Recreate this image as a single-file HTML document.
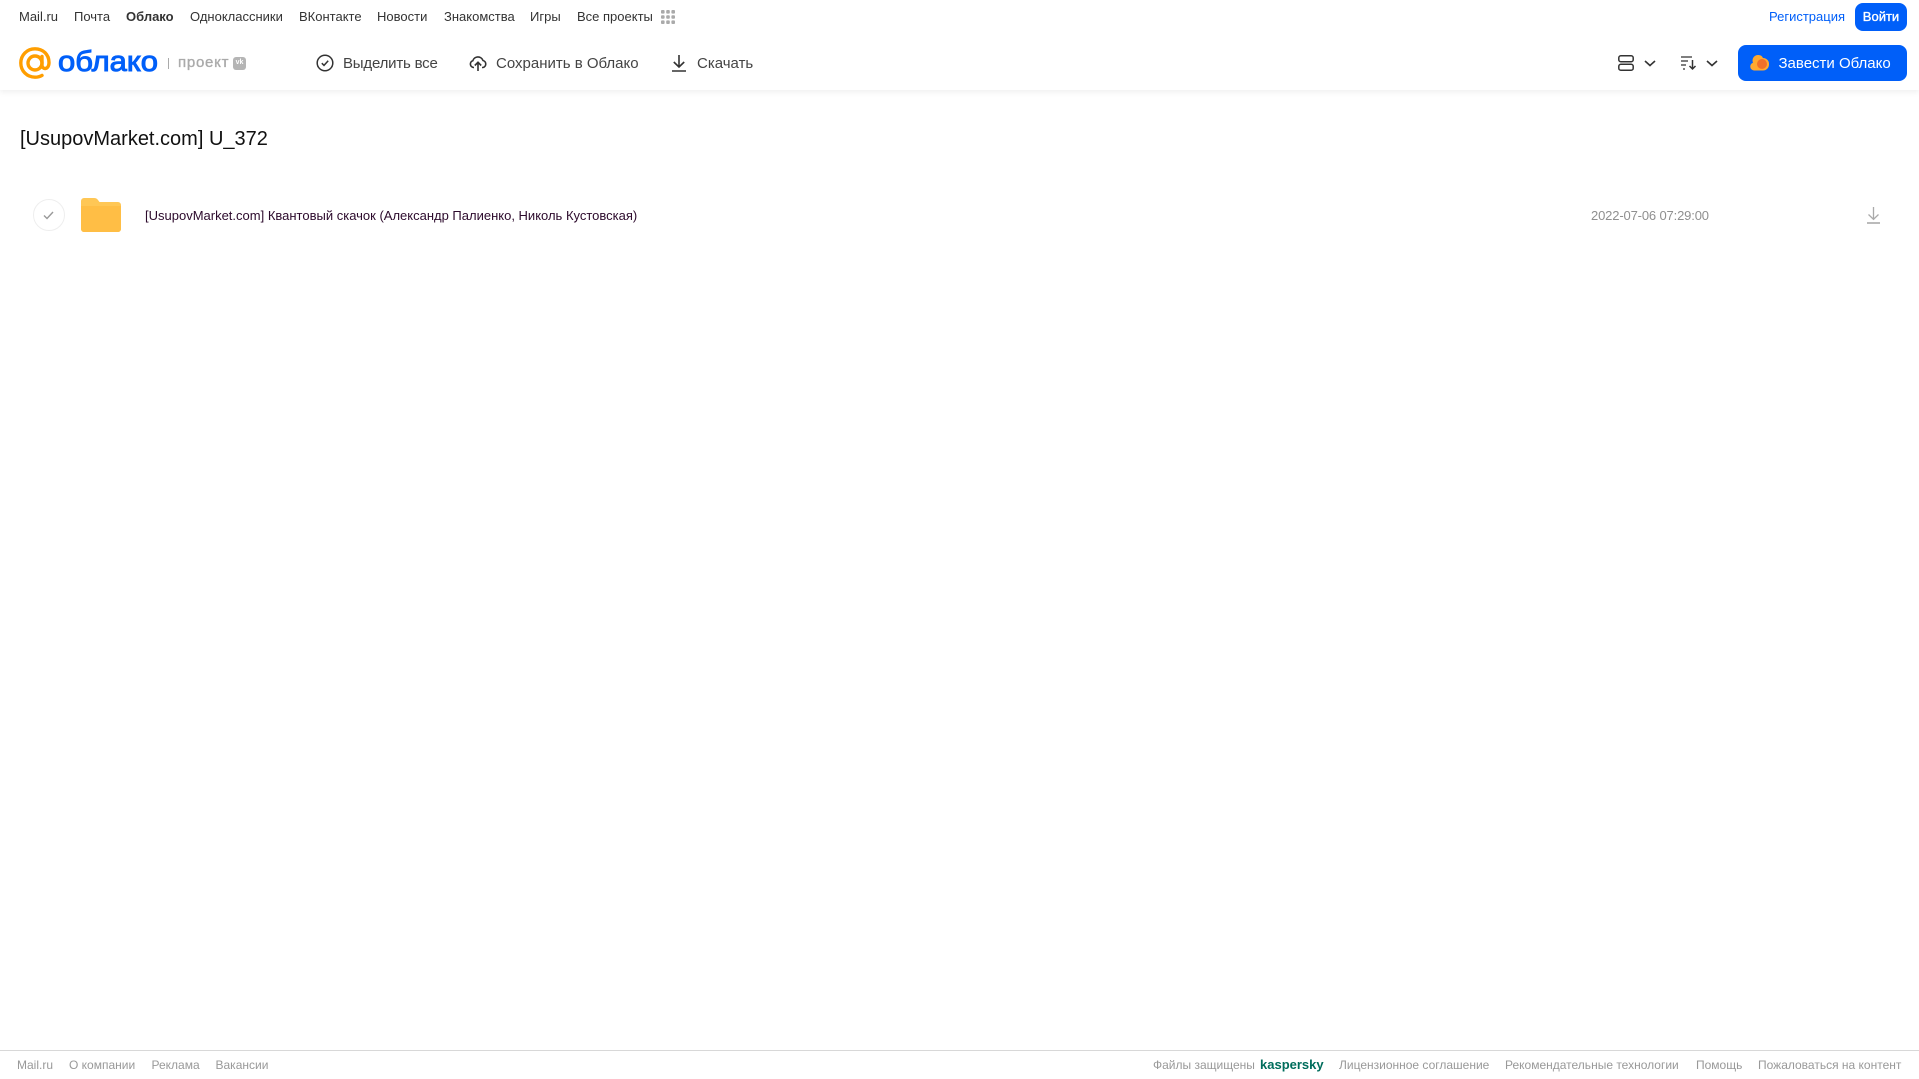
<!DOCTYPE html>
<html lang="ru"><head><meta charset="utf-8"><title>Облако</title>
<style>
html,body{margin:0;padding:0;background:#fff;width:1919px;height:1079px;overflow:hidden}
body{font-family:"Liberation Sans",Arial,sans-serif;position:relative}
.t{position:absolute;white-space:nowrap;line-height:20px;height:20px}
.n{top:7px;font-size:13px;color:#333}
.b{top:53px;font-size:15px;color:#444}
.f{top:1055px;font-size:12px;color:#999}
svg{position:absolute;overflow:visible}
#hd{position:absolute;left:0;top:0;width:1919px;height:90px;background:#fff;box-shadow:0 2px 6px rgba(0,0,0,.07)}
</style></head><body>
<div id="hd"></div>
<span class="t n" style="left:19px">Mail.ru</span>
<span class="t n" style="left:74px">Почта</span>
<span class="t n" style="left:126px;font-weight:700">Облако</span>
<span class="t n" style="left:190px">Одноклассники</span>
<span class="t n" style="left:299px">ВКонтакте</span>
<span class="t n" style="left:377px">Новости</span>
<span class="t n" style="left:444px">Знакомства</span>
<span class="t n" style="left:530px">Игры</span>
<span class="t n" style="left:577px">Все проекты</span>
<svg style="left:661px;top:10px" width="14" height="14" fill="#aaa"><rect x="0" y="0" width="3.6" height="3.6" rx="1"/><rect x="5.2" y="0" width="3.6" height="3.6" rx="1"/><rect x="10.4" y="0" width="3.6" height="3.6" rx="1"/><rect x="0" y="5.2" width="3.6" height="3.6" rx="1"/><rect x="5.2" y="5.2" width="3.6" height="3.6" rx="1"/><rect x="10.4" y="5.2" width="3.6" height="3.6" rx="1"/><rect x="0" y="10.4" width="3.6" height="3.6" rx="1"/><rect x="5.2" y="10.4" width="3.6" height="3.6" rx="1"/><rect x="10.4" y="10.4" width="3.6" height="3.6" rx="1"/></svg>
<span class="t n" style="left:1769px;color:#005ff9">Регистрация</span>
<div style="position:absolute;left:1855px;top:3px;width:52px;height:28px;border-radius:8px;background:#005ff9"></div>
<span class="t n" style="left:1855px;width:52px;text-align:center;color:#fff;-webkit-text-stroke:.35px #fff">Войти</span>

<svg style="left:19px;top:47px" width="32" height="32" viewBox="0 0 32 32" fill="none" stroke="#ff9e00" stroke-width="3.4"><circle cx="16" cy="16" r="7"/><path d="M23 9.500V18c0 5 7 5 7-2.500C30 7.500 24 1.800 16 1.800 8 1.800 1.800 8 1.800 16S8 30.200 16 30.200c3 0 5-.6 7-1.800" stroke-linecap="round"/></svg>
<svg style="left:58px;top:44px" width="100" height="36"><text x="0" y="27" font-family="Liberation Sans" font-size="29" fill="#005ff9" stroke="#005ff9" stroke-width="1" textLength="100" lengthAdjust="spacingAndGlyphs">облако</text></svg>
<div style="position:absolute;left:168px;top:58px;width:1px;height:11px;background:#aaa"></div>
<span class="t" style="left:178px;top:53px;font-size:15px;color:#aaa;-webkit-text-stroke:.35px #aaa;letter-spacing:.75px">проект</span>
<div style="position:absolute;left:233px;top:57px;width:13px;height:13px;border-radius:3px;background:#b5b5b5"></div>
<span class="t" style="left:233px;top:53px;width:13px;text-align:center;font-size:7px;font-weight:700;color:#fff">vk</span>

<svg style="left:316px;top:54px" width="18" height="18" viewBox="0 0 18 18" fill="none" stroke="#333" stroke-width="1.500"><circle cx="9" cy="9" r="7.800"/><path d="M5.800 9.200l2.200 2.200 4.200-4.600"/></svg>
<span class="t b" style="left:343px;top:53.500px;letter-spacing:-.2px">Выделить все</span>
<svg style="left:469px;top:54px" width="18" height="18" viewBox="0 0 18 18" fill="none" stroke="#333" stroke-width="1.600"><path d="M5 13.500H4.500A3.500 3.500 0 0 1 3.800 6.700 5.400 5.400 0 0 1 14 6.500a3.600 3.600 0 0 1 0 7h-1"/><path d="M9 17V8.500M5.800 11.500L9 8.300l3.200 3.200"/></svg>
<span class="t b" style="left:496px;top:53.500px">Сохранить в Облако</span>
<svg style="left:672px;top:54px" width="14" height="18" viewBox="0 0 14 18" fill="none" stroke="#333" stroke-width="1.600"><path d="M7 1v12M1.800 8L7 13l5.200-5M0 17h14"/></svg>
<span class="t b" style="left:697px;top:53.500px">Скачать</span>

<svg style="left:1618px;top:55px" width="16" height="16" viewBox="0 0 16 16" fill="none" stroke="#333" stroke-width="1.500"><rect x=".8" y=".8" width="14.400" height="5.900" rx="2"/><rect x=".8" y="9.300" width="14.400" height="5.900" rx="2"/></svg>
<svg style="left:1644px;top:60px" width="12" height="7" fill="none" stroke="#333" stroke-width="1.600"><path d="M1 1l5 4.500L11 1"/></svg>
<svg style="left:1681px;top:56px" width="16" height="14" viewBox="0 0 16 14" fill="none" stroke="#333" stroke-width="1.300"><path d="M0 1h11M0 5h7M0 9h5M2 13h2"/><path d="M11.500 4v9M8.500 10l3 3 3-3" stroke-width="1.500"/></svg>
<svg style="left:1706px;top:60px" width="12" height="7" fill="none" stroke="#333" stroke-width="1.600"><path d="M1 1l5 4.500L11 1"/></svg>

<div style="position:absolute;left:1738px;top:45px;width:169px;height:36px;border-radius:8px;background:#005ff9"></div>
<svg style="left:1750px;top:54px" width="19" height="17" viewBox="0 0 19 17"><path d="M4 16.500a4 4 0 0 1-1-7.800A5.500 5.500 0 0 1 8.500 1a5 5 0 0 1 4.500 3 6 6 0 0 1 6 6.500 6 6 0 0 1-6 6z" fill="#ffa930"/><circle cx="12" cy="10" r="5" fill="#f0702a"/></svg>
<span class="t b" style="left:1778.500px;top:53.500px;color:#fff">Завести Облако</span>

<span class="t" style="left:20px;top:125px;height:28px;line-height:28px;font-size:20px;color:#111">[UsupovMarket.com] U_372</span>

<div style="position:absolute;left:33px;top:199px;width:30px;height:30px;border:1px solid #eee;border-radius:50%"></div>
<svg style="left:43px;top:211px" width="11" height="9" fill="none" stroke="#999" stroke-width="1.400"><path d="M1 4.500l3 3L10 1"/></svg>
<svg style="left:81px;top:198px" width="40" height="34" viewBox="0 0 40 34"><path d="M3 0h10c2 0 3 .8 4 2l1.500 2H37a3 3 0 0 1 3 3v24a3 3 0 0 1-3 3H3a3 3 0 0 1-3-3V3a3 3 0 0 1 3-3z" fill="#ffc755"/><path d="M0 8h40v23a3 3 0 0 1-3 3H3a3 3 0 0 1-3-3z" fill="#ffbe45"/></svg>
<span class="t" style="left:145px;top:206px;font-size:13px;color:#2c0a2c">[UsupovMarket.com] Квантовый скачок (Александр Палиенко, Николь Кустовская)</span>
<span class="t" style="left:1591px;top:206px;font-size:13px;letter-spacing:-.15px;color:#8f8f8f">2022-07-06 07:29:00</span>
<svg style="left:1866.500px;top:207px" width="13" height="17" viewBox="0 0 13 17" fill="none" stroke="#aaa" stroke-width="1.300"><path d="M6.500 0v12M1.500 7.500l5 4.800 5-4.800"/><path d="M0 16h13" stroke-width="1.600"/></svg>

<div style="position:absolute;left:0;top:1050px;width:1919px;height:1px;background:#d8d8d8"></div>
<span class="t f" style="left:17px">Mail.ru</span>
<span class="t f" style="left:69px">О компании</span>
<span class="t f" style="left:151.500px">Реклама</span>
<span class="t f" style="left:215.500px">Вакансии</span>
<span class="t f" style="left:1153px">Файлы защищены</span>
<span class="t f" style="left:1260px;font-weight:700;color:#006d5c;font-size:13px">kaspersky</span>
<span class="t f" style="left:1339px">Лицензионное соглашение</span>
<span class="t f" style="left:1505px">Рекомендательные технологии</span>
<span class="t f" style="left:1696px">Помощь</span>
<span class="t f" style="left:1758px">Пожаловаться на контент</span>
</body></html>
